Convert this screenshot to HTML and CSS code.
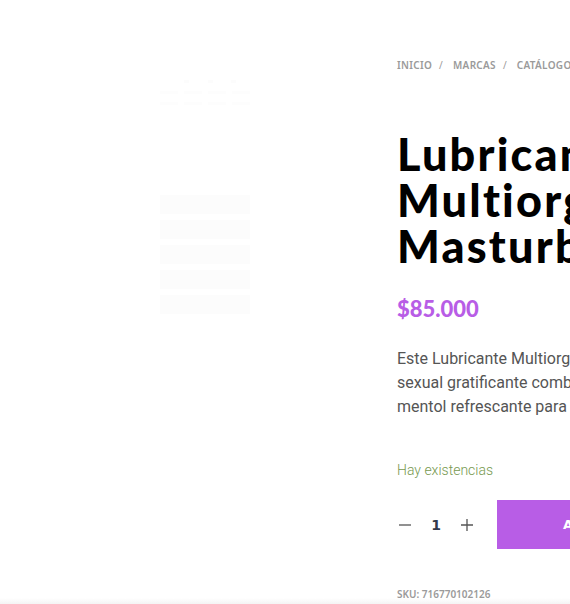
FILE: index.html
```html
<!DOCTYPE html>
<html lang="es">
<head>
  <meta charset="UTF-8">
  <title>Lubricante Multiorgásmico</title>
  <link rel="stylesheet" href="styles.css">
</head>
<body>

  <div class="product">
    <!-- Gallery placeholder (still loading) -->
    <div class="gallery">
      <div class="dots">
        <span></span><span></span><span></span>
      </div>
      <div class="dashes">
        <span></span><span></span><span></span><span></span>
      </div>
      <div class="dashes">
        <span></span><span></span><span></span><span></span>
      </div>
      <div class="thumbs">
        <div class="thumb"></div>
        <div class="thumb"></div>
        <div class="thumb"></div>
        <div class="thumb"></div>
        <div class="thumb"></div>
      </div>
    </div>

    <!-- Product info -->
    <div class="summary">
      <nav class="breadcrumb">
        <a href="#">Inicio</a><span class="sep">/</span>
        <a href="#">Marcas</a><span class="sep">/</span>
        <a href="#">Catálogo</a>
      </nav>

      <h1 class="title">Lubricante Multiorgásmico Masturbación</h1>

      <p class="price">$85.000</p>

      <p class="description">
        Este Lubricante Multiorgásmico ofrece una experiencia<br>
        sexual gratificante combinando un gel a base de agua con<br>
        mentol refrescante para una sensación única.
      </p>

      <p class="stock">Hay existencias</p>

      <form class="cart">
        <div class="qty">
          <button type="button" class="qty-btn">
            <svg width="14" height="14" viewBox="0 0 14 14"><path d="M1 7h12" stroke="#555" stroke-width="1.3"/></svg>
          </button>
          <span class="qty-value">1</span>
          <button type="button" class="qty-btn">
            <svg width="14" height="14" viewBox="0 0 14 14"><path d="M1 7h12M7 1v12" stroke="#555" stroke-width="1.3"/></svg>
          </button>
        </div>
        <button type="button" class="add-btn">Añadir al carrito</button>
      </form>

      <p class="sku">SKU: 716770102126</p>
    </div>
  </div>

  <div class="bottom-bar"></div>

</body>
</html>
```

FILE: styles.css
```css
html, body {
  overflow: hidden;
}

body {
  margin: 0;
  background-color: #ffffff;
  font-family: 'Roboto', 'Liberation Sans', sans-serif;
  color: #555;
  height: 604px;
  position: relative;
}

.product {
  display: flex;
  width: 1100px;
}

.gallery {
  width: 237px;
  flex-shrink: 0;
  padding: 80px 0 0 160px;
}

.dots {
  display: flex;
  justify-content: space-between;
  width: 52px;
  margin-left: 24px;
}

.dots span {
  width: 5px;
  height: 3px;
  background-color: #fcfcfc;
}

.dashes {
  display: flex;
  justify-content: space-between;
  width: 90px;
  margin-top: 8px;
}

.dashes span {
  width: 18px;
  height: 3px;
  background-color: #fdfdfd;
}

.thumbs {
  margin-top: 90px;
  display: flex;
  flex-direction: column;
  gap: 6px;
  width: 90px;
}

.thumb {
  height: 19px;
  background-color: #fcfcfc;
}

.summary {
  width: 600px;
  flex-shrink: 0;
  padding-top: 58px;
}

.breadcrumb {
  font-family: 'Noto Sans', sans-serif;
  font-size: 10px;
  font-weight: 600;
  text-transform: uppercase;
  color: #9a9a9a;
  letter-spacing: 0.3px;
  white-space: nowrap;
}

.breadcrumb a {
  color: #9a9a9a;
  text-decoration: none;
}

.breadcrumb .sep {
  margin: 0 7px;
  font-weight: normal;
}

.title {
  font-family: 'Lato', sans-serif;
  font-weight: 900;
  font-size: 45px;
  line-height: 46px;
  letter-spacing: 2.2px;
  color: #000;
  width: 330px;
  margin: 59px 0 0;
}

.price {
  font-family: 'Lato', sans-serif;
  font-weight: 900;
  font-size: 22px;
  color: #b85de6;
  margin: 26px 0 0;
}

.description {
  font-size: 16px;
  line-height: 24px;
  color: #555;
  margin: 25px 0 0;
  white-space: nowrap;
}

.stock {
  font-size: 14px;
  font-weight: 300;
  color: #77994f;
  margin: 43px 0 0;
}

.cart {
  display: flex;
  align-items: center;
  margin-top: 22px;
}

.qty {
  display: flex;
  align-items: center;
  width: 100px;
}

.qty-btn {
  background: none;
  border: none;
  padding: 0;
  width: 16px;
  height: 16px;
  display: flex;
  align-items: center;
  justify-content: center;
  cursor: pointer;
}

.qty-value {
  font-family: 'DejaVu Sans', sans-serif;
  font-size: 14px;
  font-weight: bold;
  color: #333a4a;
  width: 46px;
  text-align: center;
}

.add-btn {
  width: 240px;
  height: 49px;
  background-color: #b85de6;
  border: none;
  color: #fff;
  font-family: 'DejaVu Sans', sans-serif;
  font-weight: bold;
  font-size: 13px;
  text-transform: uppercase;
  text-align: left;
  padding-left: 66px;
  cursor: pointer;
}

.sku {
  font-family: 'Noto Sans', sans-serif;
  font-size: 10px;
  font-weight: 600;
  color: #9a9a9a;
  margin: 38px 0 0;
}

.bottom-bar {
  position: absolute;
  left: 0;
  right: 0;
  bottom: 0;
  height: 6px;
  background: linear-gradient(#ffffff, #f4f4f4);
}
```
